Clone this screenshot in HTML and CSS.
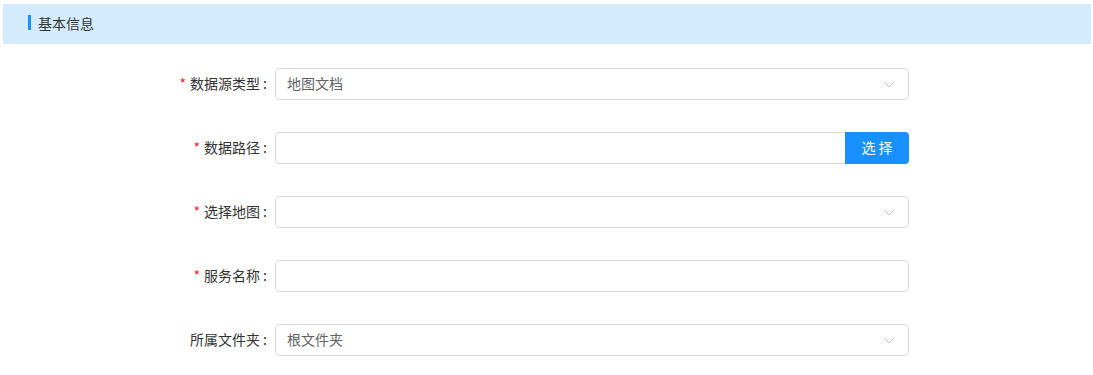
FILE: index.html
```html
<!DOCTYPE html>
<html lang="zh-CN">
<head>
<meta charset="utf-8">
<title>基本信息</title>
<link rel="stylesheet" href="styles.css">
</head>
<body>
<div class="section-header"><span class="bar"></span><span class="section-title">基本信息</span></div>
<form class="form">
  <div class="row">
    <label class="label"><span class="req">*</span>数据源类型 :</label>
    <div class="select"><span class="value">地图文档</span><svg class="chev" width="12" height="7" viewBox="0 0 12 7"><path d="M1 1 L6 6 L11 1" fill="none" stroke="#c0c4cc" stroke-width="1"/></svg></div>
  </div>
  <div class="row">
    <label class="label"><span class="req">*</span>数据路径 :</label>
    <div class="group"><div class="input grouped"></div><button type="button" class="btn">选 择</button></div>
  </div>
  <div class="row">
    <label class="label"><span class="req">*</span>选择地图 :</label>
    <div class="select"><span class="value"></span><svg class="chev" width="12" height="7" viewBox="0 0 12 7"><path d="M1 1 L6 6 L11 1" fill="none" stroke="#c0c4cc" stroke-width="1"/></svg></div>
  </div>
  <div class="row">
    <label class="label"><span class="req">*</span>服务名称 :</label>
    <div class="input"></div>
  </div>
  <div class="row">
    <label class="label">所属文件夹 :</label>
    <div class="select"><span class="value">根文件夹</span><svg class="chev" width="12" height="7" viewBox="0 0 12 7"><path d="M1 1 L6 6 L11 1" fill="none" stroke="#c0c4cc" stroke-width="1"/></svg></div>
  </div>
</form>
</body>
</html>
```
FILE: styles.css
```css
* { box-sizing: border-box; }
body {
  margin: 0;
  background: #fff;
  font-family: "Noto Sans CJK SC", "Noto Sans", sans-serif;
  font-size: 14px;
  color: #333;
}
.section-header {
  margin: 4px 2px 0 3px;
  height: 40px;
  background: #d4ebfd;
  display: flex;
  align-items: center;
  padding: 0 0 3px 25px;
}
.bar {
  width: 3px;
  height: 15px;
  background: #1890ff;
  margin-right: 7px;
}
.section-title {
  font-size: 14px;
  line-height: 20px;
  color: #333;
}
.form {
  margin: 24px 0 0 0;
  display: flex;
  flex-direction: column;
  gap: 32px;
}
.row {
  display: flex;
  align-items: center;
  height: 32px;
}
.label {
  width: 267px;
  margin-right: 8px;
  text-align: right;
  color: #333;
  font-size: 14px;
  line-height: 20px;
  padding-bottom: 2px;
  white-space: nowrap;
}
.req {
  color: #f5222d;
  margin-right: 4px;
}
.select, .input {
  width: 634px;
  height: 32px;
  border: 1px solid #d9d9d9;
  border-radius: 4px;
  background: #fff;
}
.select {
  display: flex;
  align-items: center;
  justify-content: space-between;
  padding: 0 12px 0 11px;
}
.value {
  color: #606266;
  font-size: 14px;
  line-height: 20px;
  padding-bottom: 2px;
}
.chev { display: block; margin-right: 1px; }
.group {
  display: flex;
  width: 634px;
  height: 32px;
}
.input.grouped {
  width: 570px;
  border-radius: 4px 0 0 4px;
  border-right: none;
}
.btn {
  width: 64px;
  height: 32px;
  border: none;
  border-radius: 0 4px 4px 0;
  background: #1890ff;
  color: #fff;
  font-family: inherit;
  font-size: 14px;
  line-height: 20px;
  padding: 0 0 2px 0;
  white-space: pre;
}
```
